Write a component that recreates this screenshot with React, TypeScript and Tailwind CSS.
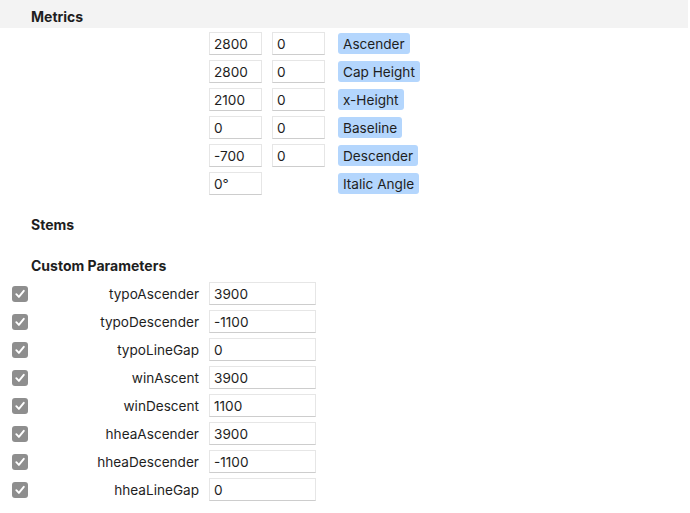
import React from "react";

interface MetricRow {
    value: string;
    overshoot?: string;
    label: string;
}

const metrics: MetricRow[] = [
    { value: "2800", overshoot: "0", label: "Ascender" },
    { value: "2800", overshoot: "0", label: "Cap Height" },
    { value: "2100", overshoot: "0", label: "x-Height" },
    { value: "0", overshoot: "0", label: "Baseline" },
    { value: "-700", overshoot: "0", label: "Descender" },
    { value: "0°", label: "Italic Angle" },
];

const params = [
    { name: "typoAscender", value: "3900" },
    { name: "typoDescender", value: "-1100" },
    { name: "typoLineGap", value: "0" },
    { name: "winAscent", value: "3900" },
    { name: "winDescent", value: "1100" },
    { name: "hheaAscender", value: "3900" },
    { name: "hheaDescender", value: "-1100" },
    { name: "hheaLineGap", value: "0" },
];

function Field({ value, wide }: { value: string; wide?: boolean }) {
    return (
        <div
            className={`h-[23px] ${
                wide ? "w-[107px]" : "w-[53px]"
            } border border-[#e6e6e6] border-b-[#cdcdcd] bg-white pl-[4px] flex items-center leading-[20px]`}
        >
            {value}
        </div>
    );
}

function Check() {
    return (
        <div className="w-[16px] h-[16px] rounded-[3px] bg-[#8e8e8e] flex items-center justify-center">
            <svg width="12" height="12" viewBox="0 0 12 12">
                <path
                    d="M2.3 6.2 L4.9 8.9 L9.8 2.8"
                    fill="none"
                    stroke="white"
                    strokeWidth="1.9"
                    strokeLinecap="round"
                    strokeLinejoin="round"
                />
            </svg>
        </div>
    );
}

export default function App() {
    return (
        <div
            className="w-[690px] h-[513px] bg-white text-[13.6px] text-[#1e1e1e] overflow-hidden"
            style={{ fontFamily: "Inter, 'Open Sans', sans-serif" }}
        >
            {/* section header */}
            <div className="h-[28px] w-[688px] bg-[#f3f3f3] pl-[31px] pt-[7px] leading-[20px] text-[14px] font-bold">
                Metrics
            </div>

            <div className="pl-[209px] pt-[4px] flex flex-col gap-[5px]">
                {metrics.map((m) => (
                    <div key={m.label} className="flex items-center h-[23px]">
                        <Field value={m.value} />
                        <div className="w-[10px]" />
                        {m.overshoot !== undefined ? (
                            <Field value={m.overshoot} />
                        ) : (
                            <div className="w-[53px]" />
                        )}
                        <div className="w-[13px]" />
                        <div className="h-[21px] px-[5px] rounded-[3px] bg-[#b4d6fd] flex items-center leading-[20px]">
                            {m.label}
                        </div>
                    </div>
                ))}
            </div>

            <div className="pl-[31px] mt-[20px] leading-[20px] text-[14px] font-bold">Stems</div>
            <div className="pl-[31px] mt-[21px] leading-[20px] text-[14px] font-bold">
                Custom Parameters
            </div>

            <div className="mt-[6px] flex flex-col gap-[5px]">
                {params.map((p) => (
                    <div key={p.name} className="flex items-center h-[23px]">
                        <div className="pl-[12px] w-[40px]">
                            <Check />
                        </div>
                        <div className="w-[159px] text-right leading-[20px]">{p.name}</div>
                        <div className="w-[10px]" />
                        <Field value={p.value} wide />
                    </div>
                ))}
            </div>
        </div>
    );
}
